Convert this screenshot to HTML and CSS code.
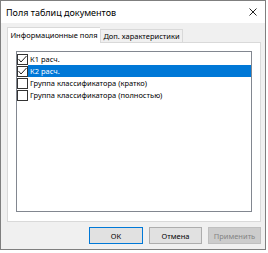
FILE: index.html
```html
<!DOCTYPE html>
<html lang="ru">
<head>
<meta charset="utf-8">
<link rel="stylesheet" href="styles.css">
</head>
<body>
<div class="window">
  <div class="titlebar">
    <span class="title">Поля таблиц документов</span>
    <svg class="close" width="8" height="8" viewBox="0 0 8 8"><path d="M0.5 0.5L7.5 7.5M7.5 0.5L0.5 7.5" stroke="#222" stroke-width="1" fill="none"/></svg>
  </div>
  <div class="body">
    <div class="tabs">
      <div class="tab active">Информационные поля</div>
      <div class="tab">Доп. характеристики</div>
    </div>
    <div class="panel">
      <div class="list">
        <div class="row"><span class="cb"><svg width="11" height="11" viewBox="0 0 11 11"><path d="M1.5 5L4 8L9.5 2" stroke="#222" stroke-width="1" fill="none"/></svg></span><span class="label">К1 расч.</span></div>
        <div class="row"><span class="cb"><svg width="11" height="11" viewBox="0 0 11 11"><path d="M1.5 5L4 8L9.5 2" stroke="#222" stroke-width="1" fill="none"/></svg></span><span class="label sel">К2 расч.</span></div>
        <div class="row"><span class="cb"></span><span class="label">Группа классификатора (кратко)</span></div>
        <div class="row"><span class="cb"></span><span class="label">Группа классификатора (полностью)</span></div>
      </div>
    </div>
    <div class="buttons">
      <button class="btn default">ОК</button>
      <button class="btn">Отмена</button>
      <button class="btn disabled">Применить</button>
    </div>
  </div>
</div>
</body>
</html>
```
FILE: styles.css
```css
html, body {
  margin: 0;
  padding: 0;
  background: #ffffff;
}
body {
  font-family: "Noto Sans", "Liberation Sans", sans-serif;
  font-size: 7.5px;
  color: #000;
}
.window {
  width: 266px;
  height: 250px;
  box-sizing: border-box;
  border: 1px solid #7f7f7f;
  background: #f0f0f0;
  display: flex;
  flex-direction: column;
}
.titlebar {
  height: 22px;
  background: #ffffff;
  display: flex;
  align-items: center;
  justify-content: space-between;
  padding: 0 8px 0 5px;
  flex: none;
}
.title {
  font-size: 9px;
  color: #000;
}
.close {
  display: block;
}
.body {
  flex: 1;
  display: flex;
  flex-direction: column;
  padding: 4px 4px 0 6px;
}
.tabs {
  display: flex;
  align-items: flex-end;
  height: 15px;
  position: relative;
  z-index: 1;
}
.tab {
  height: 13px;
  line-height: 12px;
  border: 1px solid #d9d9d9;
  border-bottom: none;
  background: #f0f0f0;
  box-sizing: border-box;
  text-align: center;
  width: 83px;
  white-space: nowrap;
  overflow: hidden;
}
.tab.active {
  width: 93px;
  background: #ffffff;
  margin-bottom: -1px;
  height: 16px;
  line-height: 14px;
  border-right: none;
}
.panel {
  border: 1px solid #d9d9d9;
  background: #ffffff;
  height: 180px;
  box-sizing: border-box;
  padding: 8px 8px 9px 8px;
  display: flex;
}
.list {
  flex: 1;
  border: 1px solid #828790;
  background: #ffffff;
  padding-top: 1px;
}
.row {
  display: flex;
  align-items: center;
  height: 12px;
  white-space: nowrap;
}
.cb {
  width: 11px;
  height: 11px;
  box-sizing: border-box;
  border: 1px solid #333333;
  background: #fff;
  flex: none;
  position: relative;
}
.cb svg {
  position: absolute;
  left: -1px;
  top: -1px;
}
.label {
  padding-left: 2px;
  line-height: 12px;
  height: 12px;
}
.label.sel {
  flex: 1;
  background: #0078d7;
  color: #ffffff;
}
.buttons {
  display: flex;
  justify-content: flex-end;
  gap: 6px;
  margin-top: 5px;
}
.btn {
  width: 53px;
  height: 17px;
  font-family: "Noto Sans", "Liberation Sans", sans-serif;
  font-size: 7.5px;
  background: #e1e1e1;
  border: 1px solid #adadad;
  padding: 0;
  color: #000;
}
.btn.default {
  width: 54px;
  border: 1px solid #0078d7;
}
.btn.disabled {
  background: #cccccc;
  border-color: #bfbfbf;
  color: #838383;
}
```
